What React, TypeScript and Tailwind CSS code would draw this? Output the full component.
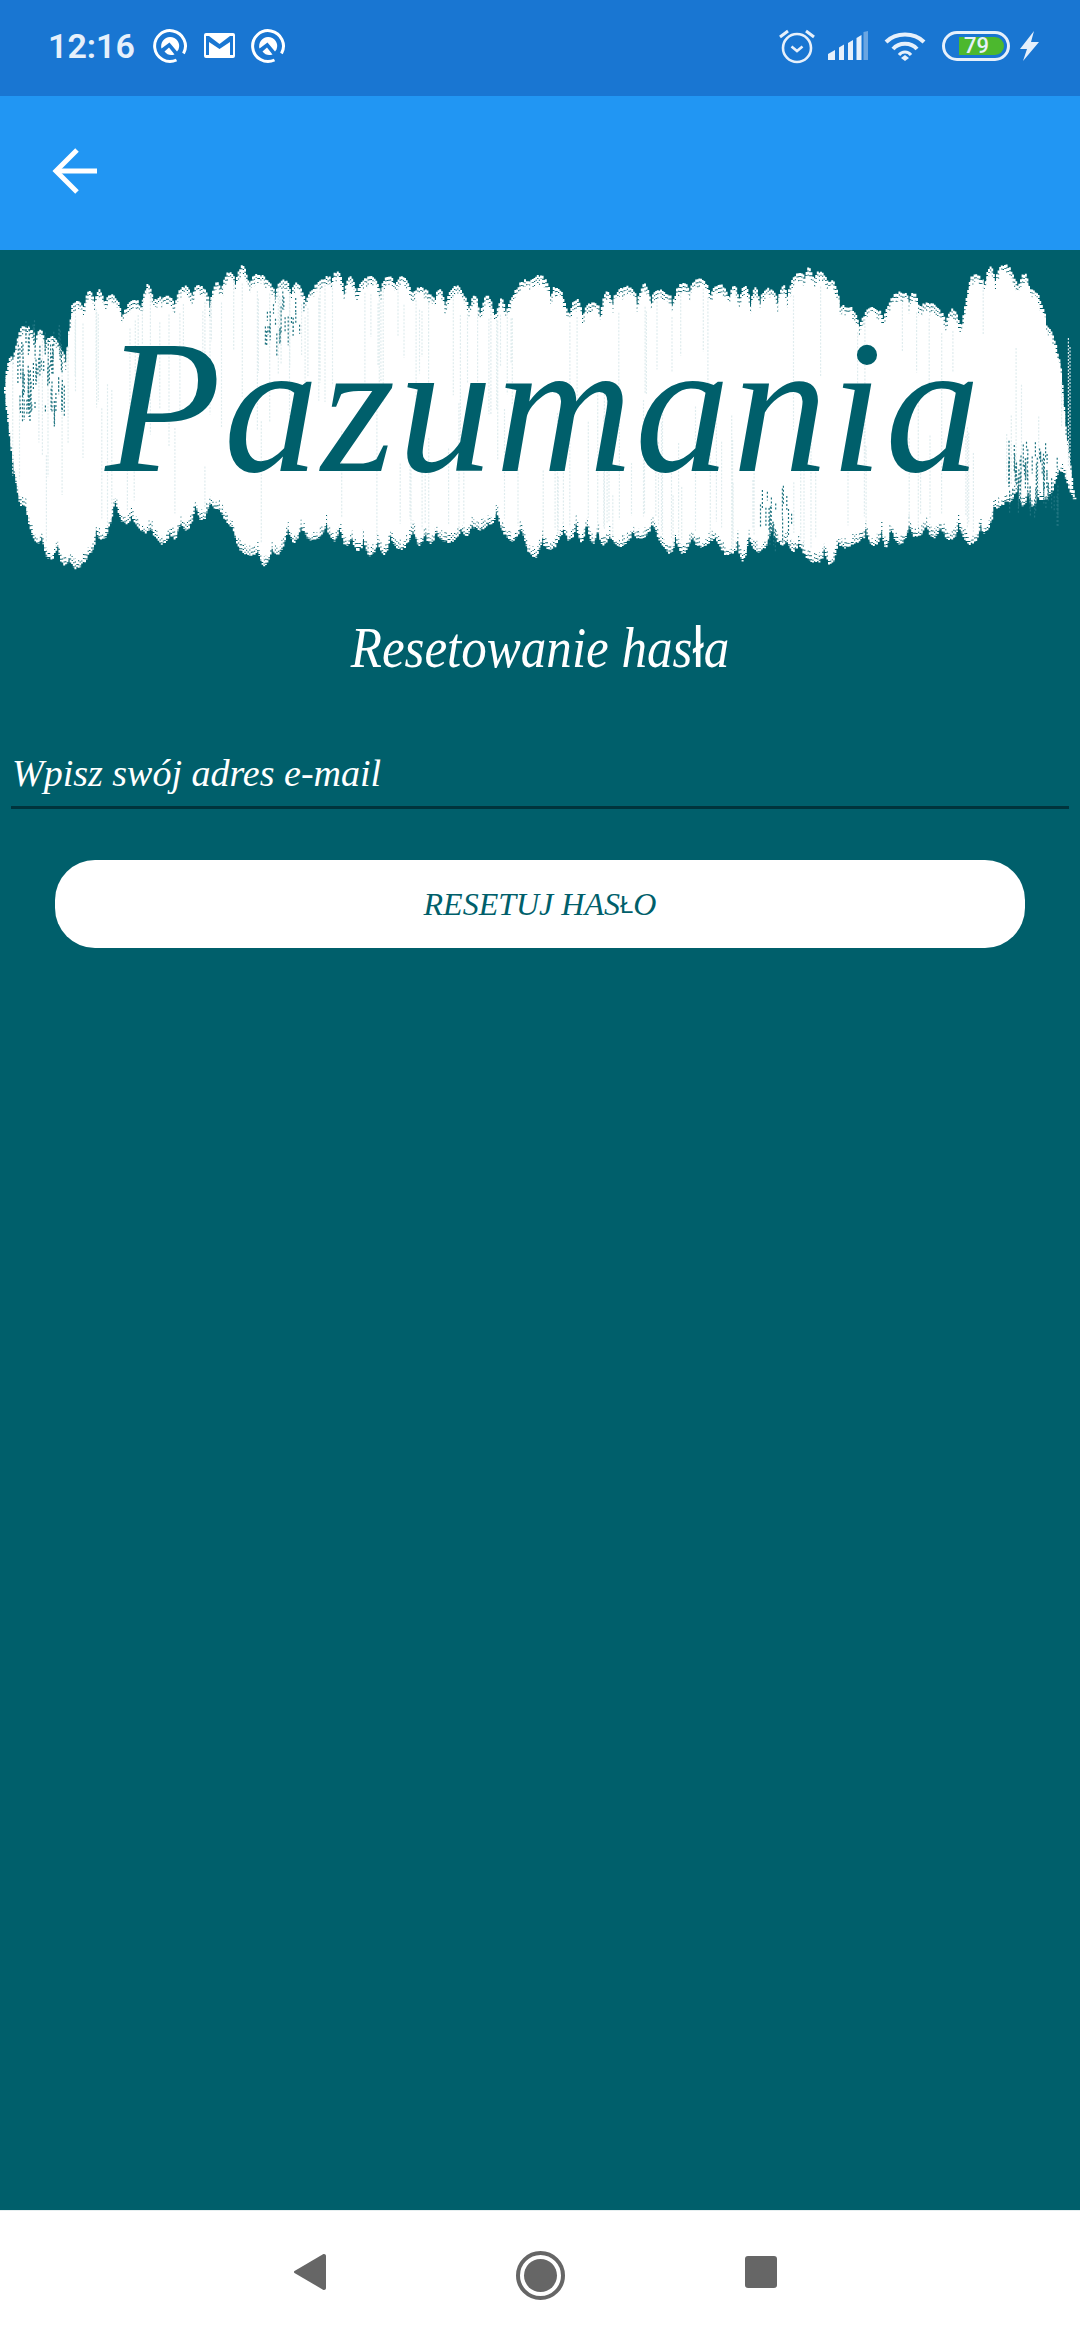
const FONT_SCRIPT = "font-['Liberation_Serif',serif] italic";

// top and bottom outline of the paint stroke, read off the reference
const TOP: [number, number][] = [
  [5, 133], [20, 90], [34, 87], [55, 100], [65, 113], [72, 67], [93, 50], [114, 58], [127, 67], [148, 47],
  [162, 60], [193, 45], [210, 53], [220, 40], [244, 27], [265, 40], [296, 43], [306, 57], [331, 33], [358, 40],
  [399, 38], [427, 53], [455, 48], [475, 57], [506, 63], [530, 35], [554, 43], [565, 60], [592, 65], [613, 50],
  [647, 47], [668, 55], [692, 38], [716, 47], [758, 50], [778, 53], [806, 28], [830, 38], [847, 70], [875, 70],
  [906, 50], [937, 70], [961, 73], [971, 40], [999, 25], [1026, 37], [1047, 73], [1061, 127], [1068, 200], [1075, 260],
];
const BOTTOM: [number, number][] = [
  [5, 167], [20, 267], [41, 313], [76, 328], [103, 300], [114, 277], [138, 287], [165, 303], [193, 283], [220, 267],
  [238, 307], [265, 325], [289, 300], [331, 297], [375, 315], [413, 303], [455, 300], [489, 283], [537, 317], [565, 297],
  [620, 305], [654, 293], [671, 315], [709, 303], [740, 320], [778, 300], [826, 327], [854, 300], [888, 307], [923, 293],
  [978, 303], [1005, 260], [1040, 267], [1064, 233], [1075, 262],
];
const OFFSET = 14;

function interp(points: [number, number][], x: number) {
  if (x <= points[0][0]) return points[0][1];
  for (let i = 0; i < points.length - 1; i++) {
    const [x0, y0] = points[i];
    const [x1, y1] = points[i + 1];
    if (x >= x0 && x <= x1) return y0 + ((y1 - y0) * (x - x0)) / (x1 - x0);
  }
  return points[points.length - 1][1];
}

function makeRandom(seed: number) {
  let s = seed;
  return () => {
    s = (s * 16807) % 2147483647;
    return s / 2147483647;
  };
}

function BrushStroke() {
  const rand = makeRandom(4711);
  const solid: string[] = [];
  const fuzz: string[] = [];
  const streaks: string[] = [];
  const specks: string[] = [];

  // bristles come in clumps, each clump ends in a rounded tip
  const tip = (x: number, centre: number, half: number, depth: number) => {
    const t = (x - centre) / half;
    return depth * t * t;
  };
  let topCentre = 0, topHalf = 0, topDepth = 0;
  let botCentre = 0, botHalf = 0, botDepth = 0;

  for (let x = 5; x < 1076; x += 1.6) {
    if (x > topCentre + topHalf) {
      topHalf = 4 + rand() * 9;
      topCentre = x + topHalf;
      topDepth = 6 + rand() * 14;
    }
    if (x > botCentre + botHalf) {
      botHalf = 4 + rand() * 9;
      botCentre = x + botHalf;
      botDepth = 6 + rand() * 14;
    }
    const top = interp(TOP, x) - OFFSET + tip(x, topCentre, topHalf, topDepth) + rand() * 3;
    const bottom = interp(BOTTOM, x) - 6 - tip(x, botCentre, botHalf, botDepth) - rand() * 3;
    if (bottom <= top) continue;
    const edge = Math.min(3 + rand() * 8, (bottom - top) / 2);
    solid.push(`M${x.toFixed(1)} ${(top + edge).toFixed(1)}V${(bottom - edge).toFixed(1)}`);
    fuzz.push(`M${x.toFixed(1)} ${top.toFixed(1)}V${bottom.toFixed(1)}`);
  }

  // faint bristle lines, mostly in the upper half on the left and lower half on the right
  for (let i = 0; i < 170; i++) {
    const x = 10 + rand() * 1060;
    const top = interp(TOP, x) - OFFSET;
    const bottom = interp(BOTTOM, x) - 6;
    const upper = rand() < (x < 540 ? 0.8 : 0.3);
    const len = 40 + rand() * 100;
    const y = upper ? top + 10 + rand() * 20 : bottom - len - 10 - rand() * 20;
    streaks.push(`M${x.toFixed(1)} ${y.toFixed(1)}v${len.toFixed(1)}`);
  }

  // teal showing through at the ends of the stroke and along the upper left edge
  const patches = [
    { x: 15, w: 50, y: 70, h: 90, n: 70 },
    { x: 1008, w: 50, y: 190, h: 60, n: 60 },
    { x: 265, w: 40, y: 40, h: 45, n: 24 },
    { x: 760, w: 40, y: 235, h: 45, n: 20 },
  ];
  for (const p of patches) {
    for (let i = 0; i < p.n; i++) {
      const x = p.x + rand() * p.w;
      const y = p.y + rand() * p.h;
      specks.push(`M${x.toFixed(1)} ${y.toFixed(1)}v${(6 + rand() * 26).toFixed(1)}`);
    }
  }

  return (
    <svg className="absolute inset-0" width="1080" height="340" viewBox="0 0 1080 340" aria-hidden="true">
      <path d={solid.join("")} stroke="#ffffff" strokeWidth="2" fill="none" />
      <path d={fuzz.join("")} stroke="#ffffff" strokeWidth="2" strokeDasharray="3 1" fill="none" />
      <path d={streaks.join("")} stroke="#dfecee" strokeWidth="1.2" strokeDasharray="2 1.5" fill="none" />
      <path d={specks.join("")} stroke="#1f7480" strokeWidth="1.2" strokeDasharray="2 2" fill="none" />
    </svg>
  );
}

function QIcon() {
  return (
    <svg width="36" height="36" viewBox="0 0 36 36" fill="none" aria-hidden="true">
      <path d="M24.5 32A15.4 15.4 0 1 1 31.5 25.5" stroke="white" strokeWidth="3" />
      <path d="M18 9A9 9 0 0 1 26.5 21.5L25 23.5L17.5 14.5L9.5 20.5A9 9 0 0 1 18 9Z" fill="white" />
      <path d="M17 19.5L22.5 26.5A9 9 0 0 1 12.5 23.5Z" fill="white" />
    </svg>
  );
}

function StatusBar() {
  return (
    <div className="flex h-[96px] items-center justify-between bg-[#1976d2] pb-[5px] pl-[48px] pr-[41px]">
      <div className="flex items-center">
        <span className="w-[104px] font-['Roboto',sans-serif] text-[34px] font-semibold leading-none text-[#e6f0fb]">12:16</span>
        <QIcon />
        <svg className="ml-[16px] mr-[15px]" width="31" height="25" viewBox="0 0 31 25" aria-hidden="true">
          <path d="M2 0H29A2 2 0 0 1 31 2V23A2 2 0 0 1 29 25H2A2 2 0 0 1 0 23V2A2 2 0 0 1 2 0ZM5 22V9L15.5 16L26 9V22H29V3H26L15.5 11L5 3H2V22Z" fill="white" fillRule="evenodd" />
        </svg>
        <QIcon />
      </div>
      <div className="flex items-center text-[#e6f0fb]">
        <svg width="38" height="36" viewBox="0 0 38 36" fill="none" stroke="currentColor" aria-hidden="true">
          <circle cx="19" cy="20" r="14" strokeWidth="2.6" />
          <path d="M13.5 18.5L19 23L24.5 18.5" strokeWidth="2.6" />
          <path d="M2 9L10 3M36 9L28 3" strokeWidth="3" />
        </svg>
        <svg className="ml-[12px]" width="40" height="29" viewBox="0 0 40 29" fill="currentColor" aria-hidden="true">
          <path d="M0 23L7 19V29H0Z" />
          <path d="M11 16.5L16 13.5V29H11Z" />
          <path d="M20 12L25 9V29H20Z" />
          <path d="M29 7L34 4V29H29Z" transform="translate(-0.5 0)" />
          <path d="M35.5 1L40 0V29H35.5Z" opacity="0.4" />
        </svg>
        <svg className="ml-[16px]" width="42" height="30" viewBox="0 0 42 30" fill="none" stroke="currentColor" strokeWidth="4" aria-hidden="true">
          <path d="M2 11C12 1 30 1 40 11" />
          <path d="M9 18C15 11 27 11 33 18" />
          <path d="M15 24C18 20 24 20 27 24" strokeWidth="3" />
          <path d="M21 24L25 27L21 30L17 27Z" fill="currentColor" stroke="none" />
        </svg>
        <div className="relative ml-[16px] flex h-[30px] w-[68px] items-center rounded-full border-[3px] border-[#e6f0fb]">
          <div className="ml-[14px] flex h-[18px] w-[45px] items-center rounded-r-full bg-[#4cb82e] pl-[5px] font-['Roboto',sans-serif] text-[22px] font-medium leading-none text-[#e6f0fb]">79</div>
        </div>
        <svg className="ml-[10px]" width="19" height="30" viewBox="0 0 19 30" fill="currentColor" aria-hidden="true">
          <path d="M14 0L0 18H7L3 30L19 11H11Z" />
        </svg>
      </div>
    </div>
  );
}

function NavBar() {
  return (
    <div className="flex h-[130px] items-center border-t border-[#e6eff0] bg-white pb-[1px] pl-[294px]">
      <svg className="mb-[6px]" width="32" height="36" viewBox="0 0 32 36" fill="#666666" aria-hidden="true">
        <path d="M0.5 17L29 0.3C30.5 -0.4 32 0.5 32 2V34C32 35.5 30.5 36.4 29 35.7L0.5 19C-0.2 18.4 -0.2 17.6 0.5 17Z" />
      </svg>
      <div className="ml-[190px] flex h-[49px] w-[49px] items-center justify-center rounded-full border-[4px] border-[#666666]">
        <div className="h-[33px] w-[33px] rounded-full bg-[#666666]" />
      </div>
      <div className="mb-[6px] ml-[180px] h-[32px] w-[32px] rounded-[3px] bg-[#666666]" />
    </div>
  );
}

export default function App() {
  return (
    <div className="flex h-[2340px] w-[1080px] flex-col overflow-hidden bg-[#005f6b]">
      <StatusBar />
      <div className="flex h-[154px] items-center bg-[#2196f3] pb-[4px] pl-[52px]">
        <svg width="46" height="46" viewBox="0 0 46 46" fill="none" stroke="white" strokeWidth="5" aria-hidden="true">
          <path d="M45 23H6" />
          <path d="M25 2L4 23L25 44" />
        </svg>
      </div>

      <main className="flex flex-1 flex-col">
        <div className="relative flex h-[340px] items-start justify-center pl-[8px]">
          <BrushStroke />
          <h1 className={`relative mt-[62px] text-[190px] leading-[190px] tracking-[2.5px] text-[#005f6b] ${FONT_SCRIPT}`}>Pazumania</h1>
        </div>

        <h2 className={`mt-[22px] scale-x-[0.88] text-center text-[58px] leading-[70px] text-white ${FONT_SCRIPT}`}>
          Resetowanie has<span className="font-['Liberation_Sans',sans-serif] not-italic">ł</span>a
        </h2>

        <div className="mx-[11px] mt-[65px] h-[61px] border-b-[3px] border-[#00343c] pl-[1px]">
          <div className={`mt-[4px] text-[38px] leading-[42px] text-white ${FONT_SCRIPT}`}>Wpisz swój adres e-mail</div>
        </div>

        <button className="mx-[55px] mt-[51px] flex h-[88px] items-center justify-center rounded-[40px] bg-white">
          <span className={`text-[32px] leading-none text-[#005f6b] ${FONT_SCRIPT}`}>
            RESETUJ HAS<span className="align-[2px] font-['Liberation_Sans',sans-serif] text-[24px] not-italic">Ł</span>O
          </span>
        </button>
      </main>

      <NavBar />
    </div>
  );
}
